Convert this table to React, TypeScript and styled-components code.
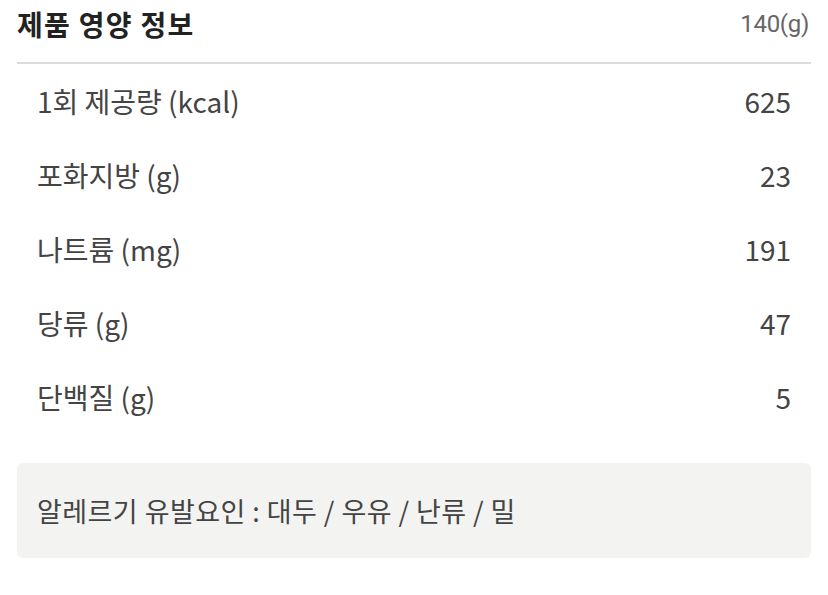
import React from "react";
import styled, { createGlobalStyle } from "styled-components";

const Global = createGlobalStyle`
  html, body { margin: 0; padding: 0; background: #fff; }
  body { font-family: "Noto Sans CJK KR", "Noto Sans", sans-serif; }
`;

const Page = styled.div`
  width: 828px;
  padding: 0 17px;
  box-sizing: border-box;
`;

const Header = styled.div`
  display: flex;
  justify-content: space-between;
  align-items: center;
  height: 64px;
  border-bottom: 2px solid #dcdcdc;
  box-sizing: border-box;
  padding-bottom: 15px;
`;

const Title = styled.h2`
  margin: 0;
  font-size: 28px;
  line-height: 1;
  font-weight: 700;
  color: #222;
  letter-spacing: 1.3px;
`;

const Weight = styled.span`
  font-family: "Roboto", "Noto Sans CJK KR", sans-serif;
  font-size: 24px;
  line-height: 1;
  color: #666;
  letter-spacing: -0.3px;
  margin-right: 2px;
`;

const List = styled.div`
  display: flex;
  flex-direction: column;
  padding: 0 20px;
`;

const Row = styled.div`
  display: flex;
  justify-content: space-between;
  align-items: center;
  height: 74px;
  font-size: 28px;
  line-height: 1;
  color: #444;
`;

const Allergy = styled.div`
  margin-top: 29px;
  background: #f3f3f2;
  border-radius: 6px;
  height: 95px;
  display: flex;
  align-items: center;
  padding: 0 20px;
  font-size: 27px;
  line-height: 1;
  color: #444;
  letter-spacing: 0.45px;
`;

const rows = [
  ["1회 제공량 (kcal)", "625"],
  ["포화지방 (g)", "23"],
  ["나트륨 (mg)", "191"],
  ["당류 (g)", "47"],
  ["단백질 (g)", "5"],
];

export default function App() {
  return (
    <>
      <Global />
      <Page>
        <Header>
          <Title>제품 영양 정보</Title>
          <Weight>140(g)</Weight>
        </Header>
        <List>
          {rows.map(([k, v]) => (
            <Row key={k}>
              <span>{k}</span>
              <span>{v}</span>
            </Row>
          ))}
        </List>
        <Allergy>알레르기 유발요인 : 대두 / 우유 / 난류 / 밀</Allergy>
      </Page>
    </>
  );
}
